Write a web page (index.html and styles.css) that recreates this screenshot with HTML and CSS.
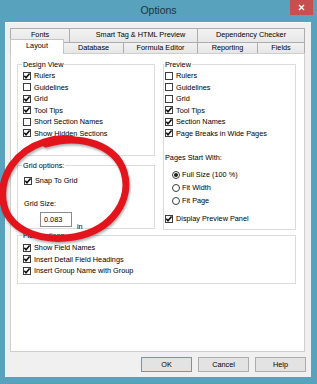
FILE: index.html
```html
<!DOCTYPE html>
<html lang="en">
<head>
  <meta charset="UTF-8">
  <title>Options</title>
  <link rel="stylesheet" href="styles.css">
</head>
<body>
  <svg width="0" height="0" class="defs">
    <symbol id="tick" viewBox="0 0 8 8">
      <polyline points="1.3,3.8 3,5.8 6.6,1.4" fill="none" stroke="#111" stroke-width="1.6"/>
    </symbol>
  </svg>

  <div class="window">
    <!-- Title bar -->
    <div class="titlebar">
      <span class="title">Options</span>
      <span class="close">
        <svg width="7" height="7" viewBox="0 0 7 7"><path d="M1 1L6 6M6 1L1 6" stroke="#fff" stroke-width="1.4"/></svg>
      </span>
    </div>

    <div class="client">
      <!-- Tabs -->
      <div class="tabrow back">
        <div class="tab w-fonts">Fonts</div>
        <div class="tab w-smart">Smart Tag &amp; HTML Preview</div>
        <div class="tab w-dep">Dependency Checker</div>
      </div>
      <div class="tabrow front">
        <div class="tab selected w-layout">Layout</div>
        <div class="tab w-db">Database</div>
        <div class="tab w-formula">Formula Editor</div>
        <div class="tab w-rep">Reporting</div>
        <div class="tab w-fields">Fields</div>
      </div>

      <div class="panel">
        <div class="layout-grid">
          <div class="col">
            <div class="group design">
              <div class="group-title">Design View</div>
              <div class="list">
                <div class="check"><span class="box"><svg><use href="#tick"/></svg></span>Rulers</div>
                <div class="check"><span class="box"></span>Guidelines</div>
                <div class="check"><span class="box"><svg><use href="#tick"/></svg></span>Grid</div>
                <div class="check"><span class="box"><svg><use href="#tick"/></svg></span>Tool Tips</div>
                <div class="check"><span class="box"></span>Short Section Names</div>
                <div class="check"><span class="box"><svg><use href="#tick"/></svg></span>Show Hidden Sections</div>
              </div>
            </div>

            <div class="group grid-opts">
              <div class="group-title">Grid options:</div>
              <div class="check snap"><span class="box"><svg><use href="#tick"/></svg></span>Snap To Grid</div>
              <div class="label grid-size">Grid Size:</div>
              <div class="size-row">
                <div class="input">0.083</div>
                <span class="unit">in</span>
              </div>
            </div>
          </div>

          <div class="group preview">
            <div class="group-title">Preview</div>
            <div class="list">
              <div class="check"><span class="box"></span>Rulers</div>
              <div class="check"><span class="box"></span>Guidelines</div>
              <div class="check"><span class="box"></span>Grid</div>
              <div class="check"><span class="box"><svg><use href="#tick"/></svg></span>Tool Tips</div>
              <div class="check"><span class="box"><svg><use href="#tick"/></svg></span>Section Names</div>
              <div class="check"><span class="box"><svg><use href="#tick"/></svg></span>Page Breaks in Wide Pages</div>
            </div>
            <div class="label pages">Pages Start With:</div>
            <div class="radios">
              <div class="radio-row"><span class="radio on"></span>Full Size (100 %)</div>
              <div class="radio-row"><span class="radio"></span>Fit Width</div>
              <div class="radio-row"><span class="radio"></span>Fit Page</div>
            </div>
            <div class="check panel-check"><span class="box"><svg><use href="#tick"/></svg></span>Display Preview Panel</div>
          </div>
        </div>

        <div class="group fields">
          <div class="group-title">Field options:</div>
          <div class="list">
            <div class="check"><span class="box"><svg><use href="#tick"/></svg></span>Show Field Names</div>
            <div class="check"><span class="box"><svg><use href="#tick"/></svg></span>Insert Detail Field Headings</div>
            <div class="check"><span class="box"><svg><use href="#tick"/></svg></span>Insert Group Name with Group</div>
          </div>
        </div>
      </div>

      <div class="buttons">
        <button class="btn default">OK</button>
        <button class="btn">Cancel</button>
        <button class="btn">Help</button>
      </div>
    </div>

    <!-- Red hand-drawn annotation -->
    <svg class="annotation" width="317" height="384" viewBox="0 0 317 384">
      <path d="M46 144 C82 133 116 146 124 172 C132 198 114 230 74 237 C38 243 6 228 3 200 C0 175 16 151 44 142 C56 138 66 138 75 140"
            fill="none" stroke="#e3141c" stroke-width="7" stroke-linecap="round"/>
    </svg>
  </div>
</body>
</html>
```

FILE: styles.css
```css
body {
  margin: 0;
  font-family: "Liberation Sans", Arial, sans-serif;
  font-size: 7.3px;
  color: #000;
}
.defs {
  position: absolute;
}
.window {
  position: relative;
  width: 317px;
  height: 384px;
  background: #58a2be;
  display: flex;
  flex-direction: column;
}
.titlebar {
  height: 22px;
  display: flex;
  align-items: flex-start;
  padding: 0 4px 0 27px;
}
.title {
  flex: 1;
  text-align: center;
  line-height: 20px;
  font-size: 10.5px;
  color: #1c3340;
}
.close {
  width: 23px;
  height: 15px;
  background: #c7504f;
  display: flex;
  align-items: center;
  justify-content: center;
}
.client {
  flex: 1;
  background: #f0f0f0;
  margin: 0 6px 7px 5px;
  padding: 6px 6px 5px 5px;
  display: flex;
  flex-direction: column;
  box-shadow: inset 1px 1px 0 #fafafa;
}

/* tabs */
.tabrow {
  display: flex;
}
.tabrow.back {
  height: 14px;
}
.tabrow.front {
  height: 11px;
  align-items: flex-end;
}
.tab {
  box-sizing: border-box;
  border: 1px solid #adadad;
  border-bottom: none;
  background: linear-gradient(#f2f2f2, #e6e6e6);
  text-align: center;
  margin-left: -1px;
  white-space: nowrap;
}
.tab:first-child {
  margin-left: 0;
}
.back .tab {
  height: 16px;
  line-height: 12px;
}
.front .tab {
  height: 11px;
  line-height: 10px;
}
.front .tab.selected {
  position: relative;
  z-index: 1;
  height: 15px;
  margin-top: -3px;
  margin-bottom: -1px;
  line-height: 12px;
  background: #fff;
  border-color: #c4c4c4;
}
.w-fonts { width: 60px; }
.w-smart { width: 129px; padding-left: 14px; }
.w-dep { width: 108px; }
.w-layout { width: 54px; }
.w-db { width: 61px; }
.w-formula { width: 75px; }
.w-rep { width: 61px; }
.w-fields { width: 48px; }

/* panel */
.panel {
  flex: 1;
  background: #fff;
  border: 1px solid #cfcfcf;
  padding: 10px 8px 0 6px;
}
.layout-grid {
  display: grid;
  grid-template-columns: 138px 133px;
  column-gap: 8px;
}
.col {
  display: flex;
  flex-direction: column;
}
.group {
  box-sizing: border-box;
  border: 1px solid #dcdcdc;
  padding-left: 5px;
}
.group-title {
  display: table;
  background: #fff;
  margin: -5px 0 0 -1px;
  padding: 0 1px;
  line-height: 9px;
}
.design {
  height: 92px;
}
.design .list {
  padding-top: 1px;
}
.grid-opts {
  height: 64px;
  margin-top: 9px;
}
.preview {
  height: 166px;
  padding-left: 1px;
}
.preview .list {
  padding-top: 1px;
}
.fields {
  height: 49px;
  margin-top: 5px;
}
.fields .list {
  padding-top: 2px;
}
.check {
  display: flex;
  align-items: center;
  height: 11.5px;
  gap: 3px;
  white-space: nowrap;
}
.box {
  box-sizing: border-box;
  width: 8px;
  height: 8px;
  border: 1px solid #3c3c3c;
  background: #fff;
  flex: none;
}
.box svg {
  display: block;
  width: 8px;
  height: 8px;
  margin: -1px 0 0 -1px;
}
.label {
  line-height: 9px;
}

/* preview extras */
.pages {
  margin-top: 14px;
}
.radios {
  margin-top: 6px;
  padding-left: 7px;
}
.radio-row {
  display: flex;
  align-items: center;
  height: 13px;
  gap: 2px;
}
.radio {
  box-sizing: border-box;
  width: 8px;
  height: 8px;
  border: 1px solid #3c3c3c;
  border-radius: 50%;
  background: #fff;
  display: flex;
  align-items: center;
  justify-content: center;
}
.radio.on::after {
  content: "";
  width: 4px;
  height: 4px;
  border-radius: 50%;
  background: #1e1e1e;
}
.panel-check {
  margin-top: 6px;
}

/* grid options extras */
.snap {
  margin-top: 5px;
  padding-left: 1px;
}
.grid-size {
  margin-top: 12px;
  padding-left: 1px;
}
.size-row {
  display: flex;
  align-items: flex-end;
  margin-top: 4px;
  padding-left: 17px;
  gap: 5px;
}
.input {
  box-sizing: border-box;
  width: 32px;
  height: 15px;
  border: 1px solid #8a8a8a;
  background: #fff;
  line-height: 13px;
  padding-left: 3px;
}
.unit {
  line-height: 9px;
  margin-bottom: -4px;
}

/* buttons */
.buttons {
  display: flex;
  justify-content: flex-end;
  gap: 6px;
  margin: 5px -1px 0 0;
}
.btn {
  box-sizing: border-box;
  width: 51px;
  height: 15px;
  padding: 0;
  border: 1px solid #adadad;
  background: #e3e3e3;
  font-family: inherit;
  font-size: 7.3px;
  color: #000;
}
.btn.default {
  border-color: #5b9bd5;
}

/* annotation */
.annotation {
  position: absolute;
  left: 0;
  top: 0;
  pointer-events: none;
  filter: drop-shadow(1px 2px 1px rgba(0, 0, 0, 0.3));
}
```
